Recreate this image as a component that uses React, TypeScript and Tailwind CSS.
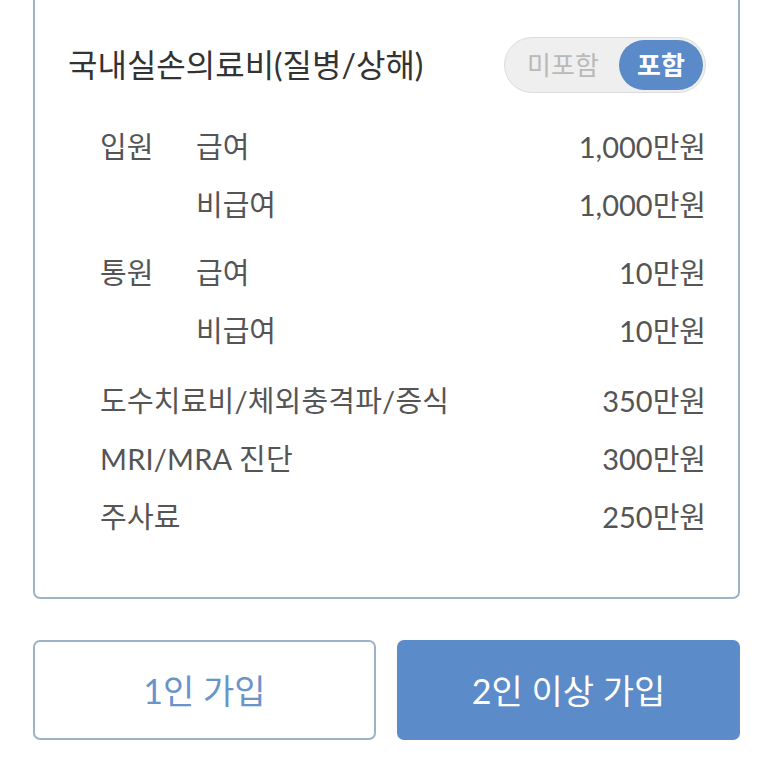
import React from "react";

const font = { fontFamily: 'Lato, "Noto Sans CJK KR", sans-serif' };

type Row = { a?: string; b?: string; full?: string; v: string };

function ItemRow({ r }: { r: Row }) {
  return (
    <div className="flex h-[58px] items-center justify-between text-[29px] text-[#555555]">
      {r.full ? (
        <span className="tracking-[0.2px]">{r.full}</span>
      ) : (
        <div className="flex">
          <span className="w-[96px]">{r.a ?? ""}</span>
          <span>{r.b}</span>
        </div>
      )}
      <span>{r.v}</span>
    </div>
  );
}

export default function App() {
  const g1: Row[] = [
    { a: "입원", b: "급여", v: "1,000만원" },
    { b: "비급여", v: "1,000만원" },
  ];
  const g2: Row[] = [
    { a: "통원", b: "급여", v: "10만원" },
    { b: "비급여", v: "10만원" },
  ];
  const g3: Row[] = [
    { full: "도수치료비/체외충격파/증식", v: "350만원" },
    { full: "MRI/MRA 진단", v: "300만원" },
    { full: "주사료", v: "250만원" },
  ];
  return (
    <div className="min-h-[779px] overflow-hidden bg-white px-[33px]" style={font}>
      <div className="-mt-[10px] rounded-[7px] border-2 border-[#9db4c6] pb-[51px] pl-[33px] pr-[32px] pt-[45px]">
        <div className="flex h-[56px] items-center justify-between">
          <span className="text-[32px] text-[#333333]">국내실손의료비(질병/상해)</span>
          <div className="flex h-[56px] w-[202px] items-center rounded-full border border-[#dcdcdc] bg-[#efefef] p-[2px]">
            <span className="flex-1 text-center text-[26px] text-[#b9b9b9]">미포함</span>
            <span className="flex h-[50px] w-[84px] items-center justify-center rounded-full bg-[#5a8ac8] text-[26px] font-bold text-white">
              포함
            </span>
          </div>
        </div>
        <div className="mt-[25px] pl-[32px]">
          {g1.map((r, i) => (
            <ItemRow key={i} r={r} />
          ))}
          <div className="mt-[10px]">
            {g2.map((r, i) => (
              <ItemRow key={i} r={r} />
            ))}
          </div>
          <div className="mt-[12px]">
            {g3.map((r, i) => (
              <ItemRow key={i} r={r} />
            ))}
          </div>
        </div>
      </div>
      <div className="mt-[41px] grid grid-cols-2 gap-[21px]">
        <button className="flex h-[100px] items-center justify-center rounded-[7px] border-2 border-[#9ab3c8] bg-white text-[34px] text-[#6a94c8]">
          1인 가입
        </button>
        <button className="flex h-[100px] items-center justify-center rounded-[7px] bg-[#5b8bc8] text-[34px] text-white">
          2인 이상 가입
        </button>
      </div>
    </div>
  );
}
